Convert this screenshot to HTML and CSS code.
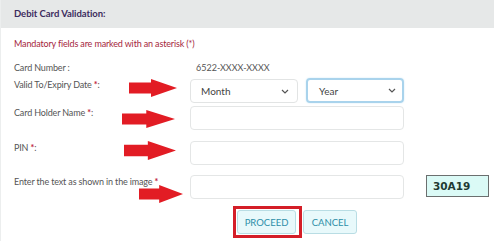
FILE: index.html
```html
<!DOCTYPE html>
<html lang="en">
<head>
    <meta charset="UTF-8">
    <meta name="viewport" content="width=device-width, initial-scale=1.0">
    <title>Debit Card Validation</title>
    <link rel="stylesheet" href="styles.css">
</head>
<body>
    <div class="panel">
        <div class="panel-head">Debit Card Validation:</div>

        <form class="panel-body" id="cardForm">
            <p class="note">Mandatory fields are marked with an asterisk (*)</p>

            <div class="row row-card">
                <span class="label">Card Number :</span>
                <span class="card-no">6522-XXXX-XXXX</span>
            </div>

            <div class="row row-expiry">
                <span class="label">Valid To/Expiry Date <b class="req">*</b>:</span>
                <div class="selects">
                    <div class="select month">Month
                        <svg class="chev" width="8" height="5" viewBox="0 0 8 5"><path d="M1 1l3 3 3-3" fill="none" stroke="#555" stroke-width="1.2"/></svg>
                    </div>
                    <div class="select year focused">Year
                        <svg class="chev" width="8" height="5" viewBox="0 0 8 5"><path d="M1 1l3 3 3-3" fill="none" stroke="#555" stroke-width="1.2"/></svg>
                    </div>
                </div>
            </div>

            <div class="row row-name">
                <span class="label">Card Holder Name <b class="req">*</b>:</span>
                <input type="text" class="field">
            </div>

            <div class="row row-pin">
                <span class="label">PIN <b class="req">*</b>:</span>
                <input type="password" class="field">
            </div>

            <div class="row row-captcha">
                <span class="label">Enter the text as shown in the image <b class="req">*</b></span>
                <input type="text" class="field">
                <div class="captcha">30A19</div>
            </div>

            <div class="actions">
                <div class="highlight">
                    <button type="button" class="btn">PROCEED</button>
                </div>
                <button type="button" class="btn cancel">CANCEL</button>
            </div>

            <!-- annotation arrows -->
            <svg class="arrow a1" viewBox="0 0 48 18" preserveAspectRatio="none"><path d="M0 3.5H22V0L48 9L22 18V14.5H0Z"/></svg>
            <svg class="arrow a2" viewBox="0 0 48 18" preserveAspectRatio="none"><path d="M0 3.5H22V0L48 9L22 18V14.5H0Z"/></svg>
            <svg class="arrow a3" viewBox="0 0 48 18" preserveAspectRatio="none"><path d="M0 3.5H22V0L48 9L22 18V14.5H0Z"/></svg>
            <svg class="arrow a4" viewBox="0 0 48 18" preserveAspectRatio="none"><path d="M0 3.5H22V0L48 9L22 18V14.5H0Z"/></svg>
        </form>
    </div>
</body>
</html>
```

FILE: styles.css
```css
body {
    font-family: 'Lato', 'Liberation Sans', sans-serif;
    background-color: #fff;
    margin: 0;
    padding: 0;
    width: 494px;
    height: 241px;
    overflow: hidden;
}

.panel {
    border-left: 1px solid #eceeee;
    height: 241px;
}

.panel-head {
    background-color: #e6e8e8;
    color: #3c2c5e;
    font-weight: bold;
    font-size: 9.5px;
    letter-spacing: -0.05px;
    height: 28px;
    line-height: 27px;
    padding-left: 13px;
}

.panel-body {
    position: relative;
    padding: 9px 0 0 13px;
    margin: 0;
}

.note {
    margin: 0;
    color: #a5263c;
    font-size: 9px;
    letter-spacing: -0.15px;
    line-height: 14px;
}

.row {
    display: grid;
    grid-template-columns: 176px 214px auto;
    align-items: start;
}

.label {
    color: #555;
    font-size: 9px;
    letter-spacing: -0.15px;
    line-height: 14px;
}

.req {
    color: #c0243a;
    font-weight: bold;
}

.row-card {
    margin-top: 10px;
}

.card-no {
    color: #555;
    font-size: 9px;
    line-height: 14px;
    padding-left: 6px;
}

.row-expiry {
    margin-top: 4px;
}

.row-expiry .label {
    margin-top: -1px;
}

.selects {
    display: flex;
    gap: 8px;
}

.select {
    box-sizing: border-box;
    height: 24px;
    border: 1px solid #e2e4e4;
    border-radius: 4px;
    display: flex;
    align-items: center;
    justify-content: space-between;
    padding: 0 8px 0 10px;
    font-size: 10px;
    color: #444;
}

.month {
    width: 108px;
}

.year {
    width: 98px;
    padding-left: 11px;
    padding-right: 6px;
}

.focused {
    border: 2px solid #a9d3ec;
    box-shadow: 0 0 2px #cfe8f6;
    margin-top: -1px;
    height: 25px;
}

.field {
    box-sizing: border-box;
    width: 214px;
    height: 24px;
    border: 1px solid #e4e6e6;
    border-radius: 4px;
    margin: 0;
    padding: 0 8px;
    outline: none;
}

.row-name {
    margin-top: 3px;
}

.row-pin {
    margin-top: 11px;
}

.row-captcha {
    margin-top: 10px;
}

.captcha {
    box-sizing: border-box;
    margin-left: 22px;
    width: 63px;
    height: 22px;
    background-color: #dbfaf6;
    border: 1px solid #6b6f6f;
    font-family: 'DejaVu Sans', sans-serif;
    font-weight: bold;
    font-size: 10.5px;
    line-height: 20px;
    padding-left: 6px;
    color: #1f3a33;
}

.actions {
    display: flex;
    align-items: center;
    margin-top: 7px;
    padding-left: 219px;
}

.highlight {
    border: 3px solid #d41e28;
    padding: 1px;
    box-sizing: border-box;
    width: 69px;
    height: 32px;
    display: flex;
}

.btn {
    font-family: 'Lato', 'Liberation Sans', sans-serif;
    background-color: #e8f9fb;
    border: 1px solid #b9dde4;
    border-radius: 3px;
    color: #2d8ea8;
    font-size: 9.5px;
    cursor: pointer;
    padding: 0;
    width: 59px;
    height: 24px;
}

.cancel {
    width: 54px;
    height: 24px;
    margin-left: 1px;
}

.arrow {
    position: absolute;
    fill: #e21c24;
}

.a1 { left: 128px; top: 51px; width: 48px; height: 18px; }
.a2 { left: 121px; top: 82px; width: 53px; height: 18px; }
.a3 { left: 123px; top: 113px; width: 52px; height: 19px; }
.a4 { left: 138px; top: 157px; width: 44px; height: 18px; }
```
